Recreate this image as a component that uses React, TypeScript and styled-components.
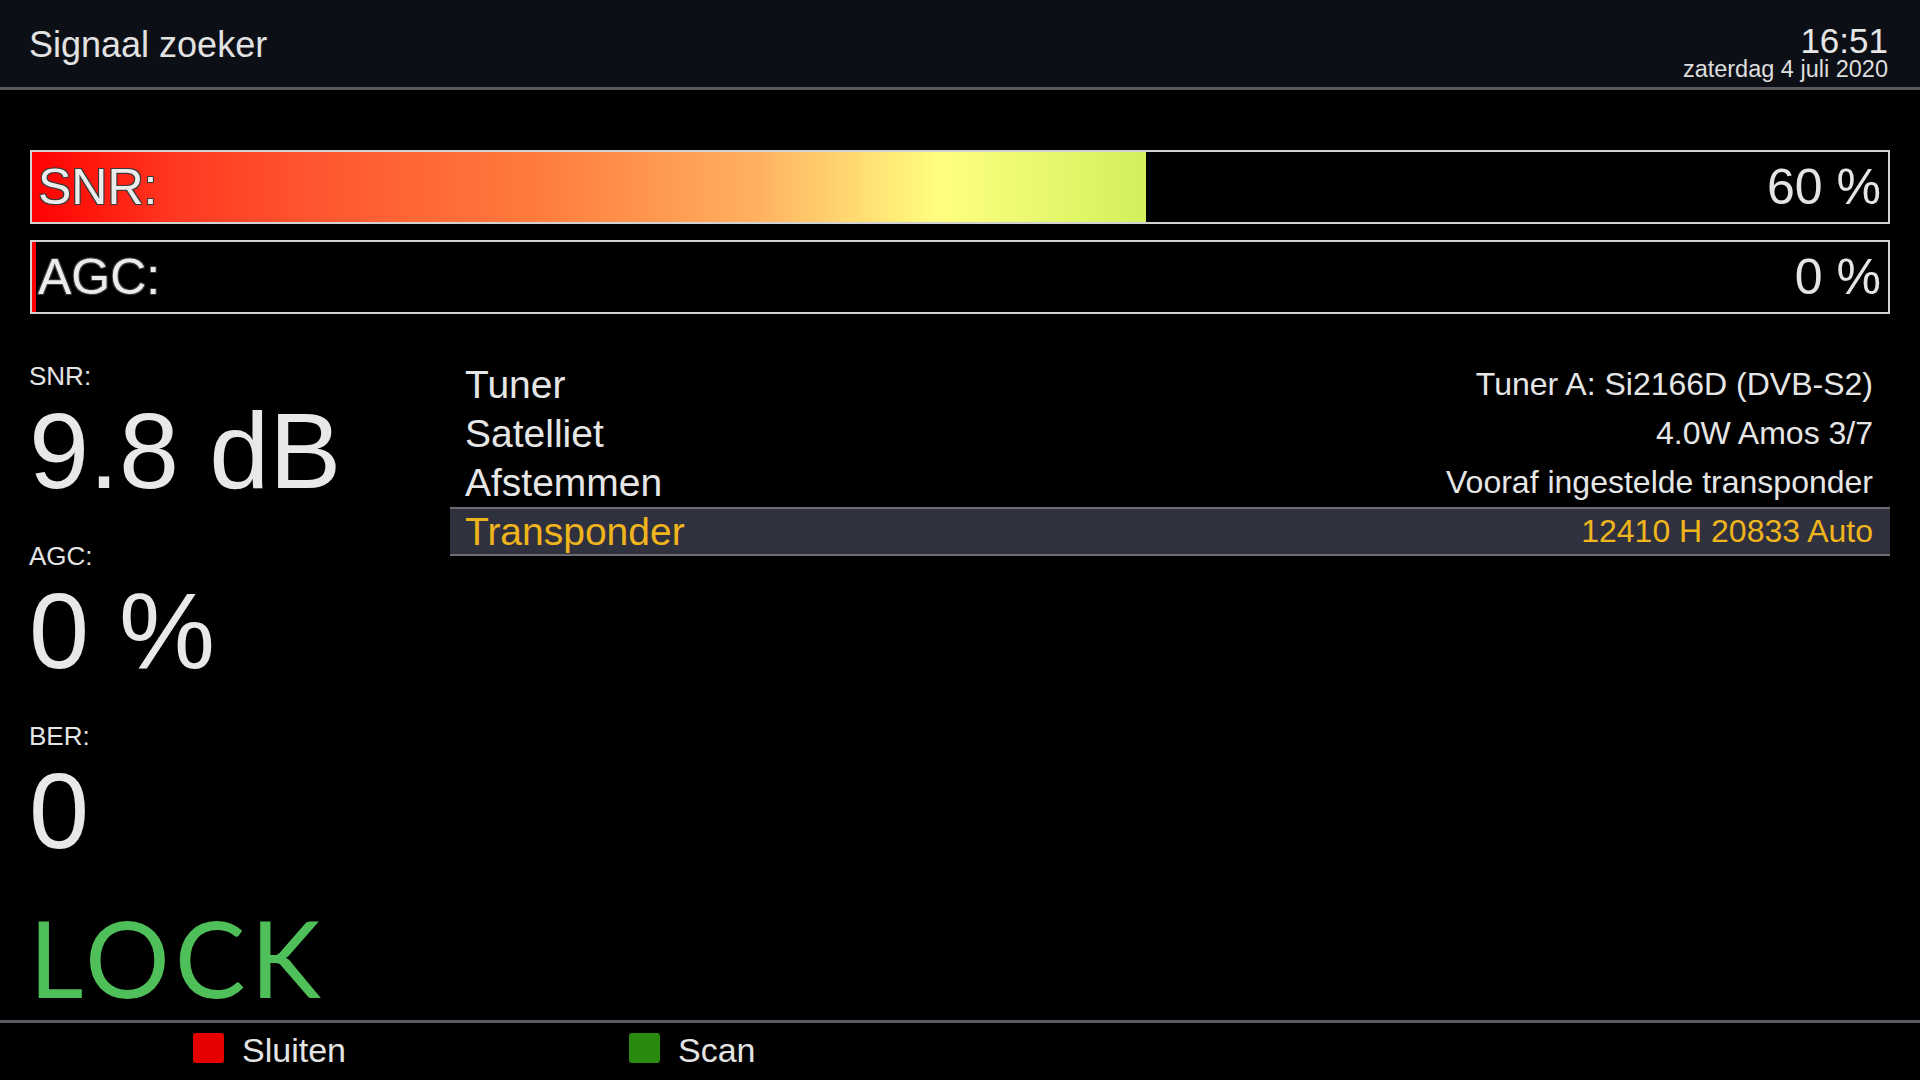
import React from 'react';
import styled, { createGlobalStyle } from 'styled-components';

const GlobalStyle = createGlobalStyle`
  html, body {
    margin: 0;
    padding: 0;
    background: #000;
  }
  body {
    font-family: "Liberation Sans", Arial, sans-serif;
    color: #e6e6e6;
  }
`;

const Screen = styled.div`
  width: 1920px;
  height: 1080px;
  display: flex;
  flex-direction: column;
  background: #000;
  overflow: hidden;
`;

const Header = styled.header`
  height: 87px;
  flex: none;
  box-sizing: border-box;
  display: flex;
  justify-content: space-between;
  align-items: flex-start;
  padding: 0 32px 0 29px;
  background: #0d0f16;
`;

const Title = styled.h1`
  margin: 27px 0 0;
  font-size: 36px;
  line-height: 36px;
  font-weight: 400;
  color: #e2e2e2;
`;

const Clock = styled.div`
  margin-top: 23px;
  display: flex;
  flex-direction: column;
  align-items: flex-end;
`;

const Time = styled.div`
  font-size: 35px;
  line-height: 35px;
  color: #e6e6e6;
`;

const DateLine = styled.div`
  font-size: 23.5px;
  line-height: 23px;
  color: #dedede;
`;

const Divider = styled.div`
  height: 3px;
  flex: none;
  background: #5a5a60;
`;

const Bars = styled.section`
  flex: none;
  display: flex;
  flex-direction: column;
  gap: 16px;
  padding: 60px 30px 0;
`;

const Bar = styled.div`
  height: 74px;
  box-sizing: border-box;
  border: 2px solid #d2d2d2;
  display: grid;
  grid-template: 1fr / 1fr;
  background: linear-gradient(
    to right,
    #ff0000 0%,
    #ff3a22 8%,
    #ff5530 15%,
    #ff7a3c 27%,
    #ffb060 39%,
    #ffd870 44%,
    #ffff80 49%,
    #d2f05c 60%,
    #90e048 80%,
    #48c840 100%
  );
`;

const BarCover = styled.div`
  grid-area: 1 / 1;
  justify-self: end;
  background: #000;
`;

const BarText = styled.div`
  grid-area: 1 / 1;
  display: flex;
  justify-content: space-between;
  align-items: center;
  padding: 0 7px 0 6px;
  font-size: 50px;
  line-height: 50px;
`;

const BarLabel = styled.span`
  color: #ececec;
  text-shadow: -1px -1px 0 #3a3a3a, 1px -1px 0 #3a3a3a, -1px 1px 0 #3a3a3a,
    1px 1px 0 #3a3a3a;
`;

const BarValue = styled.span`
  color: #e4e4e4;
`;

const Content = styled.main`
  flex: 1;
  min-height: 0;
  display: grid;
  grid-template-columns: 421px 1fr;
  align-items: start;
  padding: 46px 30px 0 29px;
`;

const Stats = styled.div`
  display: flex;
  flex-direction: column;
  gap: 36px;
  padding-top: 1px;
`;

const Stat = styled.div`
  display: flex;
  flex-direction: column;
  gap: 6px;
`;

const StatLabel = styled.div`
  font-size: 26px;
  line-height: 30px;
  color: #e4e4e4;
`;

const StatValue = styled.div`
  font-size: 108px;
  line-height: 108px;
  color: #e8e8e8;
`;

const Lock = styled.div`
  margin-top: 3px;
  font-family: Lato, "Liberation Sans", sans-serif;
  font-size: 106px;
  line-height: 106px;
  letter-spacing: 5px;
  color: #4fbf5a;
`;

const Table = styled.div`
  display: flex;
  flex-direction: column;
`;

const Row = styled.div<{ $active?: boolean }>`
  height: 49px;
  display: flex;
  justify-content: space-between;
  align-items: center;
  padding: 0 17px 0 15px;
  line-height: 49px;
  color: ${(p) => (p.$active ? '#f0b41c' : '#e6e6e6')};
  background: ${(p) => (p.$active ? '#2f313e' : 'transparent')};
  box-shadow: ${(p) =>
    p.$active ? 'inset 0 2px 0 #6c6c72, inset 0 -2px 0 #6c6c72' : 'none'};
`;

const RowLabel = styled.span`
  font-size: 39px;
`;

const RowValue = styled.span`
  font-size: 32px;
`;

const Footer = styled.footer`
  height: 57px;
  flex: none;
  box-sizing: border-box;
  display: flex;
  align-items: flex-start;
  padding: 10px 0 0 193px;
`;

const Key = styled.div`
  width: 436px;
  display: flex;
  align-items: flex-start;
  gap: 18px;
`;

const KeySwatch = styled.span<{ $color: string }>`
  flex: none;
  width: 31px;
  height: 30px;
  border-radius: 3px;
  background: ${(p) => p.$color};
`;

const KeyLabel = styled.span`
  margin-top: 2px;
  font-size: 34px;
  line-height: 30px;
  color: #e4e4e4;
`;

const meters = [
  { label: 'SNR:', pct: 60 },
  { label: 'AGC:', pct: 0 },
];

const stats = [
  { label: 'SNR:', value: '9.8 dB' },
  { label: 'AGC:', value: '0 %' },
  { label: 'BER:', value: '0' },
];

const rows = [
  { label: 'Tuner', value: 'Tuner A: Si2166D (DVB-S2)' },
  { label: 'Satelliet', value: '4.0W Amos 3/7' },
  { label: 'Afstemmen', value: 'Vooraf ingestelde transponder' },
  { label: 'Transponder', value: '12410 H 20833 Auto', active: true },
];

export default function App() {
  return (
    <Screen>
      <GlobalStyle />
      <Header>
        <Title>Signaal zoeker</Title>
        <Clock>
          <Time>16:51</Time>
          <DateLine>zaterdag 4 juli 2020</DateLine>
        </Clock>
      </Header>
      <Divider />

      <Bars>
        {meters.map((m) => (
          <Bar key={m.label}>
            {/* black part hides the gradient past the level, a 4px sliver stays at 0 */}
            <BarCover style={{ width: `min(calc(100% - 4px), ${100 - m.pct}%)` }} />
            <BarText>
              <BarLabel>{m.label}</BarLabel>
              <BarValue>{m.pct} %</BarValue>
            </BarText>
          </Bar>
        ))}
      </Bars>

      <Content>
        <Stats>
          {stats.map((s) => (
            <Stat key={s.label}>
              <StatLabel>{s.label}</StatLabel>
              <StatValue>{s.value}</StatValue>
            </Stat>
          ))}
          <Lock>LOCK</Lock>
        </Stats>

        <Table>
          {rows.map((r) => (
            <Row key={r.label} $active={r.active}>
              <RowLabel>{r.label}</RowLabel>
              <RowValue>{r.value}</RowValue>
            </Row>
          ))}
        </Table>
      </Content>

      <Divider />
      <Footer>
        <Key>
          <KeySwatch $color="#e60000" />
          <KeyLabel>Sluiten</KeyLabel>
        </Key>
        <Key>
          <KeySwatch $color="#2a8a10" />
          <KeyLabel>Scan</KeyLabel>
        </Key>
      </Footer>
    </Screen>
  );
}
